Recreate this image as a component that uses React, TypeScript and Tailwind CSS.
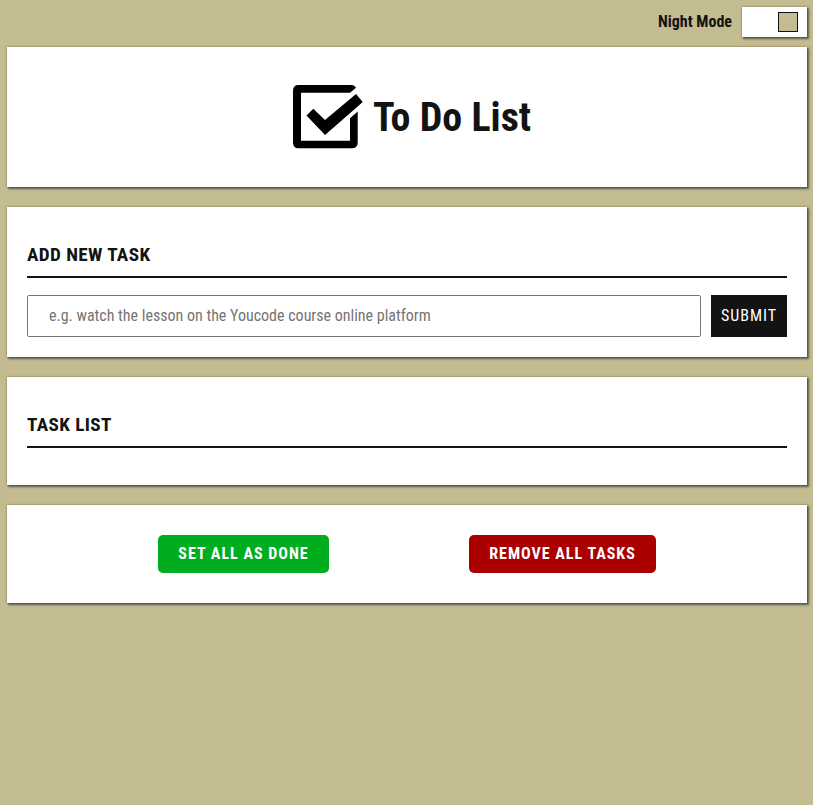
import type { ReactNode } from "react";

function Card({ className, children }: { className: string; children?: ReactNode }) {
  return (
    <section className={`bg-white shadow-[1px_1px_2px_0.5px_#10152590,0_0_2px_#50302080] ${className}`}>
      {children}
    </section>
  );
}

function Heading({ children }: { children: ReactNode }) {
  return (
    <h2 className="h-[41px] border-b-2 border-[#131313] pt-[5px] text-[19.2px] leading-[26px] font-bold tracking-[0.4px] uppercase">
      {children}
    </h2>
  );
}

function CheckLogo() {
  return (
    <svg className="h-16 w-[70px]" viewBox="0 0 70 64" fill="#000">
      <path
        fillRule="evenodd"
        d="M5.5 0H59Q61.5 0 63 2.7L57 7.7H8V55.7H57V33.3L64.7 26.5V57.5Q64.7 63.3 59 63.3H5.5Q0 63.3 0 57.5V5.8Q0 0 5.5 0Z"
      />
      <path d="M13.5 30.5L20.3 23.7L32 35L63 9L69.8 17L32 50Z" />
    </svg>
  );
}

export default function App() {
  return (
    <div className="flex min-h-screen flex-col bg-[#c4bc91] pt-[7px] pr-[6px] pl-[7px] font-['Roboto_Condensed','Roboto',sans-serif] text-base text-[#131313]">
      <div className="mb-[10px] flex h-[30px] items-center justify-end gap-[10px]">
        <span className="font-bold">Night Mode</span>
        <button className="flex h-[30px] w-[65px] items-center justify-end bg-white pr-[9px] shadow-[1px_1px_2px_0.5px_#10152590,0_0_2px_#50302080]">
          <span className="h-5 w-5 border border-[#131313] bg-[#c4bc91]" />
        </button>
      </div>
      <Card className="flex h-[140px] items-center justify-center gap-[10px] pl-[10px]">
        <CheckLogo />
        <h1 className="pt-[2px] text-[40px] leading-[48px] font-bold">To Do List</h1>
      </Card>
      <Card className="mt-5 h-[150px] px-5 pt-[30px]">
        <Heading>Add new task</Heading>
        <form className="mt-[17px] flex gap-[10px]">
          <input
            className="h-[42px] min-w-0 flex-1 rounded-[2px] border border-[#767676] px-[21px] pb-[2px] placeholder:text-[#757575] placeholder:opacity-100"
            placeholder="e.g. watch the lesson on the Youcode course online platform"
          />
          <button type="button" className="h-[42px] w-[76px] bg-[#131313] text-base tracking-[1px] text-white uppercase">
            Submit
          </button>
        </form>
      </Card>
      <Card className="mt-5 h-[108px] px-5 pt-[30px]">
        <Heading>Task list</Heading>
      </Card>
      <Card className="mt-5 flex h-[98px] items-center justify-center gap-[140px]">
        <button className="h-[38px] w-[171px] rounded-[5px] bg-[#00ad1f] font-bold tracking-[1px] text-white uppercase">
          Set all as done
        </button>
        <button className="h-[38px] w-[187px] rounded-[5px] bg-[#ab0000] font-bold tracking-[1px] text-white uppercase">
          Remove all tasks
        </button>
      </Card>
    </div>
  );
}
